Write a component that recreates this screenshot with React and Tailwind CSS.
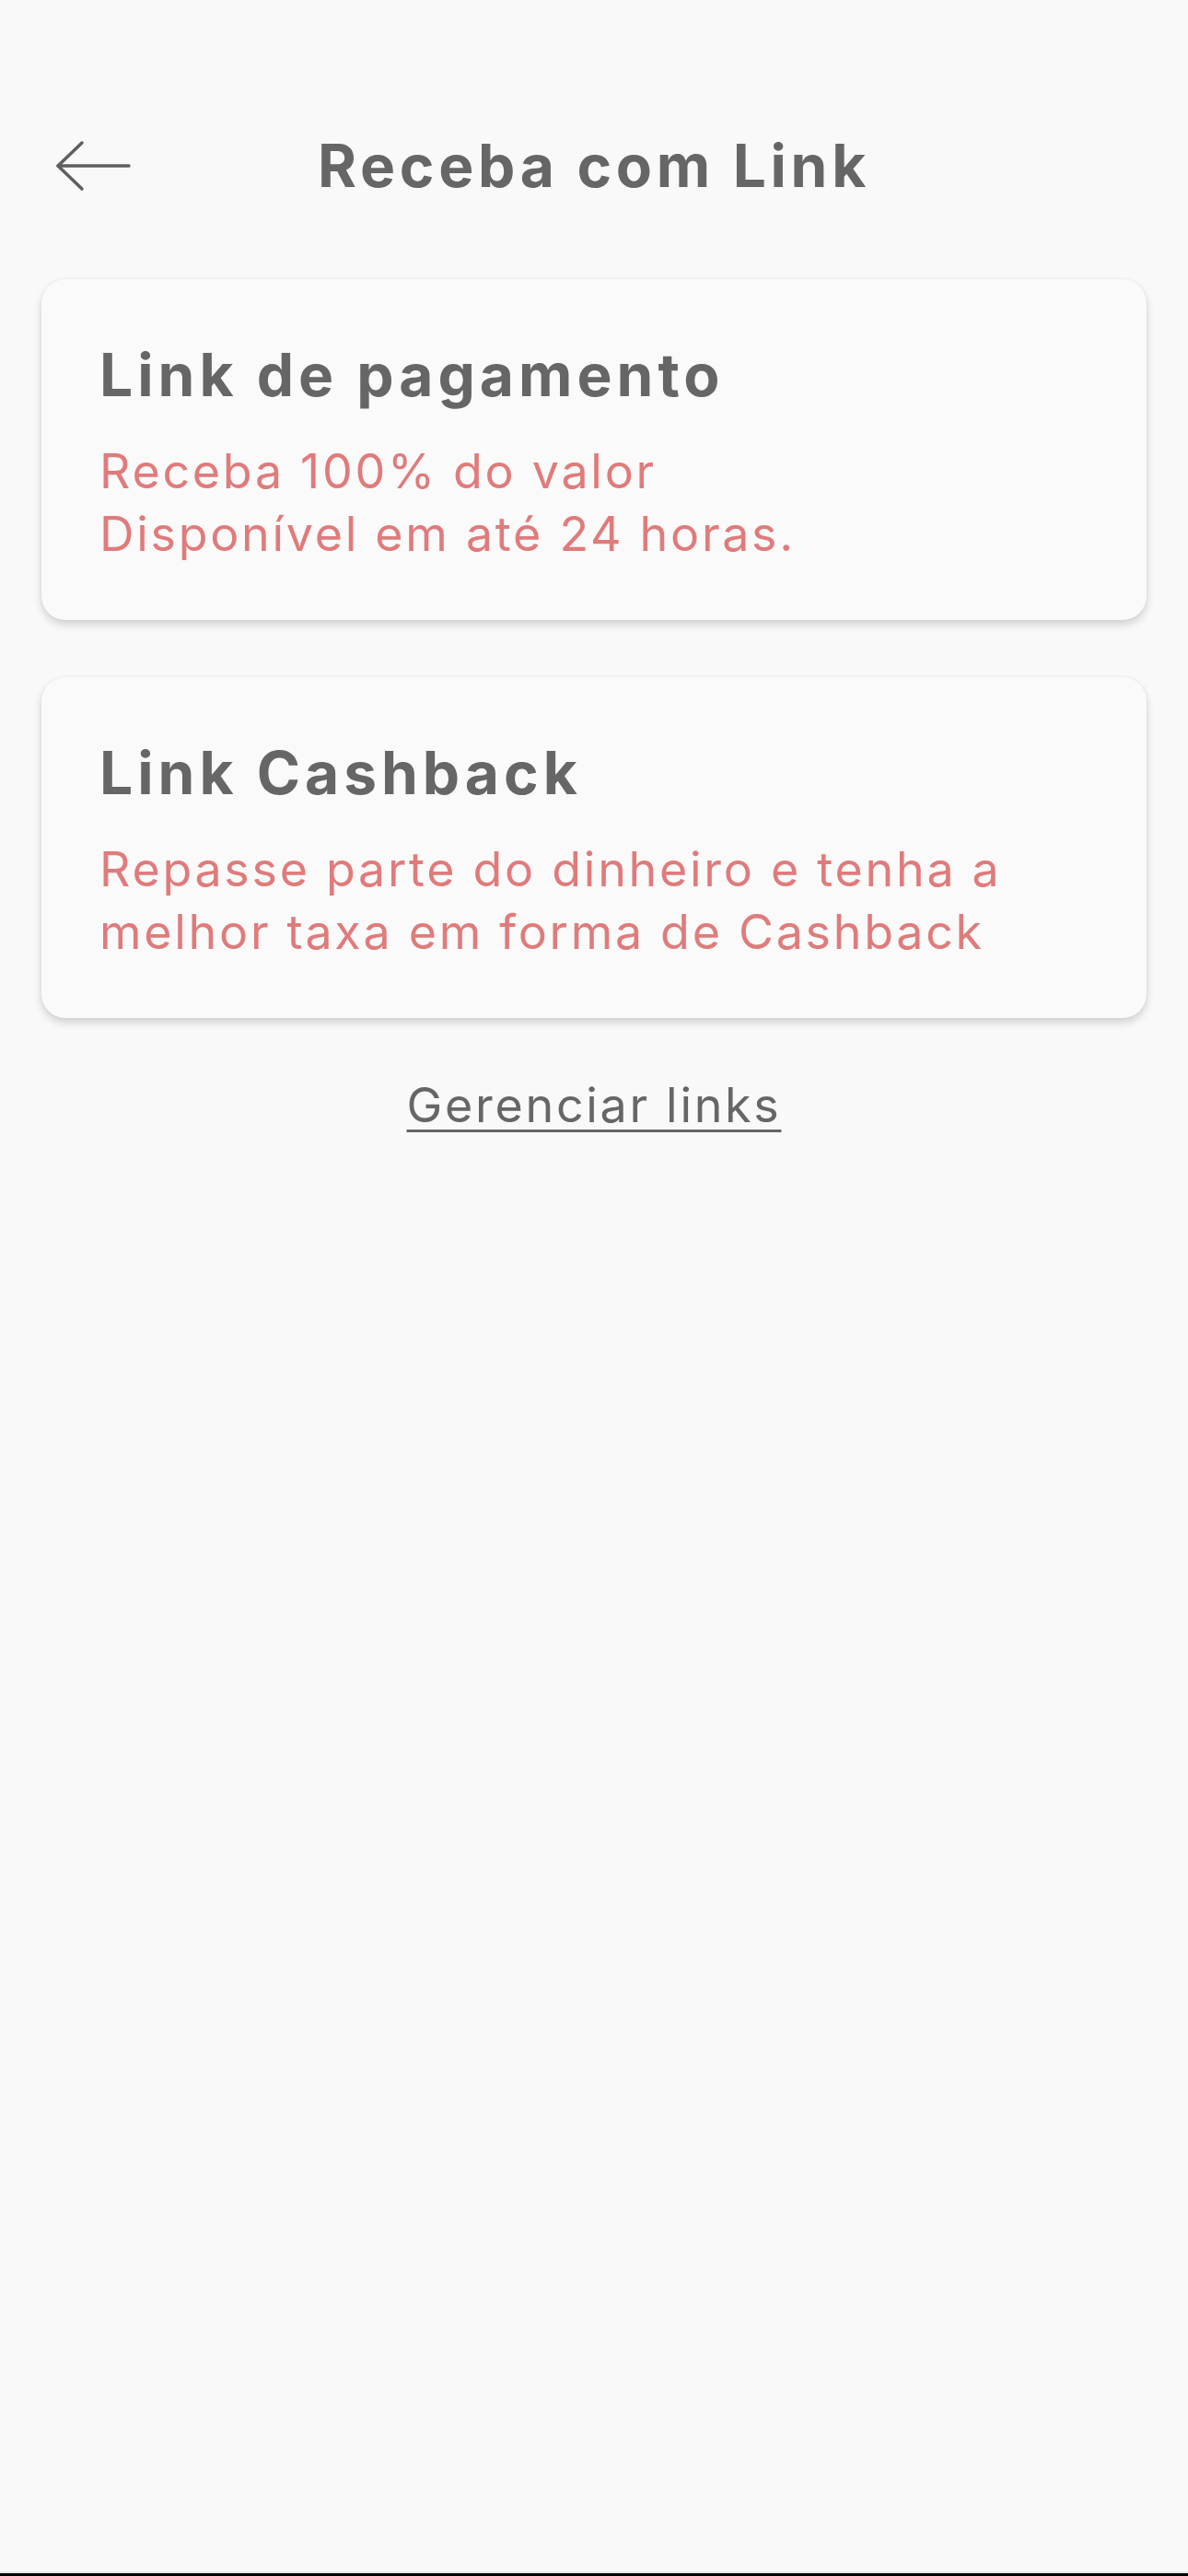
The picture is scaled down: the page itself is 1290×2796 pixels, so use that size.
import React from "react";

function BackArrow() {
  return (
    <svg width="82" height="56" viewBox="0 0 82 56" fill="none" className="block">
      <path d="M3 28 H80" stroke="#5f5f5f" strokeWidth="3.5" strokeLinecap="round" />
      <path d="M29 3 L3 28 L29 53" stroke="#5f5f5f" strokeWidth="3.5" strokeLinecap="round" strokeLinejoin="round" />
    </svg>
  );
}

function Card({ title, lines }) {
  return (
    <div className="rounded-[26px] bg-[#fafafa] shadow-[0_5px_10px_rgba(0,0,0,0.16),0_0_3px_rgba(0,0,0,0.06)] pl-[63px] pr-[30px] pt-[64px] pb-[59px]">
      <div className="text-[64px] leading-[80px] font-bold text-[#666666] tracking-[5px]">{title}</div>
      <div className="mt-[31px] text-[52px] leading-[68px] font-normal text-[#e07b7b] tracking-[2.7px]">
        {lines.map((l, i) => (
          <div key={i} className="whitespace-nowrap">{l}</div>
        ))}
      </div>
    </div>
  );
}

export default function App() {
  return (
    <div
      className="w-full h-[2796px] bg-[#f9f9f9] flex flex-col"
      style={{ fontFamily: "Inter, 'Open Sans', 'Liberation Sans', sans-serif" }}
    >
      <div className="pt-[130px] h-[230px] grid grid-cols-[1fr_auto_1fr] items-center px-[60px]">
        <div className="flex items-center h-[100px]">
          <BackArrow />
        </div>
        <div className="text-[64px] leading-[100px] font-bold text-[#666666] text-center tracking-[4.7px]">Receba com Link</div>
        <div />
      </div>

      <div className="px-[45px] pt-[73px] flex flex-col gap-[62px]">
        <Card title="Link de pagamento" lines={["Receba 100% do valor", "Disponível em até 24 horas."]} />
        <Card title="Link Cashback" lines={["Repasse parte do dinheiro e tenha a", "melhor taxa em forma de Cashback"]} />
      </div>

      <div className="mt-[61px] flex justify-center">
        <span className="text-[52px] leading-[68px] text-[#666666] tracking-[2.7px] underline decoration-[3px] underline-offset-[8px]">
          Gerenciar links
        </span>
      </div>

      <div className="flex-1" />
      <div className="h-[2px] bg-[#e6e6e6]" />
      <div className="h-[3px] bg-black" />
    </div>
  );
}
